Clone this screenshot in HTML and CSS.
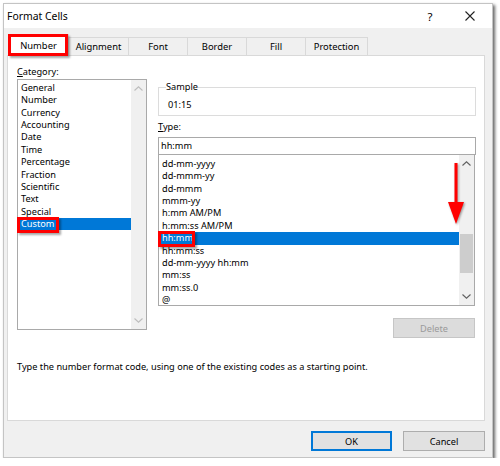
FILE: index.html
```html
<!DOCTYPE html>
<html>
<head>
<meta charset="utf-8">
<link rel="stylesheet" href="styles.css">
</head>
<body>
<div class="dialog">
  <div class="titlebar">
    <span class="title">Format Cells</span>
    <span class="help">?</span>
    <span class="close"><svg width="10" height="10" viewBox="0 0 10 10"><path d="M0.5 0.5 L9.5 9.5 M9.5 0.5 L0.5 9.5" stroke="#222" stroke-width="1.1" fill="none"/></svg></span>
  </div>
  <div class="tabs">
    <div class="tab active">Number<span class="mark"></span></div>
    <div class="tab w60">Alignment</div>
    <div class="tab w59">Font</div>
    <div class="tab w59">Border</div>
    <div class="tab w59">Fill</div>
    <div class="tab w62">Protection</div>
  </div>
  <div class="panel">
    <div class="columns">
      <div class="col-left">
        <div class="label"><u>C</u>ategory:</div>
        <div class="listbox cat">
          <div class="items">
            <div class="item">General</div>
            <div class="item">Number</div>
            <div class="item">Currency</div>
            <div class="item">Accounting</div>
            <div class="item">Date</div>
            <div class="item">Time</div>
            <div class="item">Percentage</div>
            <div class="item">Fraction</div>
            <div class="item">Scientific</div>
            <div class="item">Text</div>
            <div class="item">Special</div>
            <div class="item sel">Custom<span class="mark mark-cat"></span></div>
          </div>
          <div class="vscroll light">
            <div class="sbtn"><svg width="9" height="5" viewBox="0 0 9 5"><path d="M0.5 4.5 L4.5 0.8 L8.5 4.5" stroke="currentColor" stroke-width="1.1" fill="none"/></svg></div>
            <div class="track"></div>
            <div class="sbtn"><svg width="9" height="5" viewBox="0 0 9 5"><path d="M0.5 0.5 L4.5 4.2 L8.5 0.5" stroke="currentColor" stroke-width="1.1" fill="none"/></svg></div>
          </div>
        </div>
      </div>
      <div class="col-right">
        <fieldset class="sample">
          <legend>Sample</legend>
          <div class="sample-val">01:15</div>
        </fieldset>
        <div class="label type-label"><u>T</u>ype:</div>
        <div class="input">hh:mm</div>
        <div class="listbox types">
          <div class="items">
            <div class="item">dd-mm-yyyy</div>
            <div class="item">dd-mmm-yy</div>
            <div class="item">dd-mmm</div>
            <div class="item">mmm-yy</div>
            <div class="item">h:mm AM/PM</div>
            <div class="item">h:mm:ss AM/PM</div>
            <div class="item sel">hh:mm<span class="mark mark-type"></span></div>
            <div class="item">hh:mm:ss</div>
            <div class="item">dd-mm-yyyy hh:mm</div>
            <div class="item">mm:ss</div>
            <div class="item">mm:ss.0</div>
            <div class="item">@</div>
          </div>
          <div class="vscroll">
            <div class="sbtn"><svg width="9" height="5" viewBox="0 0 9 5"><path d="M0.5 4.5 L4.5 0.8 L8.5 4.5" stroke="currentColor" stroke-width="1.1" fill="none"/></svg></div>
            <div class="track"><div class="thumb"></div></div>
            <div class="sbtn"><svg width="9" height="5" viewBox="0 0 9 5"><path d="M0.5 0.5 L4.5 4.2 L8.5 0.5" stroke="currentColor" stroke-width="1.1" fill="none"/></svg></div>
          </div>
          <svg class="arrow" width="20" height="66" viewBox="0 0 20 66"><rect x="7.5" y="1" width="3" height="41" fill="#ff0000"/><polygon points="1,40 17,40 9,62" fill="#ff0000"/></svg>
        </div>
        <div class="delete-row"><button class="btn disabled">Delete</button></div>
      </div>
    </div>
    <p class="desc">Type the number format code, using one of the existing codes as a starting point.</p>
  </div>
  <div class="footer">
    <button class="btn default ok">OK</button>
    <button class="btn cancel">Cancel</button>
  </div>
</div>
</body>
</html>
```

FILE: styles.css
```css
* { box-sizing: border-box; }
html, body { margin: 0; padding: 0; background: #fff; }
body {
  font-family: "Noto Sans", "Open Sans", sans-serif;
  font-size: 9.2px;
  color: #000;
}
.dialog {
  margin: 3px 0 0 3px;
  width: 490px;
  height: 455px;
  background: #f0f0f0;
  border: 1px solid #c4c4c4;
  box-shadow: 2px 2px 3px rgba(0,0,0,0.6);
  display: flex;
  flex-direction: column;
}
.titlebar {
  height: 24px;
  background: #fff;
  display: flex;
  align-items: center;
  padding-left: 3px;
  padding-right: 14px;
}
.title { flex: 1; font-size: 10.4px; }
.help { width: 16px; text-align: center; font-size: 11.5px; margin-right: 24px; }
.close { width: 16px; display: flex; justify-content: center; }

.tabs {
  height: 27px;
  display: flex;
  align-items: flex-end;
  padding-left: 4px;
  position: relative;
  z-index: 2;
}
.tab {
  height: 18px;
  line-height: 17px;
  text-align: center;
  border: 1px solid #d9d9d9;
  border-bottom: none;
  margin-left: -1px;
  background: #f0f0f0;
  font-size: 9.4px;
}
.tab.active {
  position: relative;
  margin-left: 0;
  width: 61px;
  line-height: 21px;
  background: #fff;
  margin-bottom: -1px;
  height: 22px;
}
.w60 { width: 61px; }
.w59 { width: 60px; }
.w62 { width: 63px; }
.mark {
  position: absolute;
  border: 3px solid #ff0000;
  box-shadow: 2px 2px 2px rgba(0,0,0,0.35);
  pointer-events: none;
}
.tab .mark { left: -1px; top: -1px; right: 0; bottom: 0; }

.panel {
  margin-left: 3px;
  width: 478px;
  height: 366px;
  background: #fff;
  border: 1px solid #d9d9d9;
  padding: 9px 0 0 9px;
  position: relative;
  z-index: 1;
}
.columns {
  display: grid;
  grid-template-columns: 130px 318px;
  column-gap: 11px;
  align-items: start;
}
.label { height: 14px; line-height: 14px; }
.listbox {
  display: flex;
  border: 1px solid #a9a9a9;
  background: #fff;
  position: relative;
}
.listbox.cat { height: 251px; }
.items { flex: 1; padding-top: 2px; }
.item {
  height: 12.36px;
  line-height: 12.36px;
  padding-left: 3px;
  white-space: nowrap;
  position: relative;
}
.item.sel { background: #0078d7; color: #fff; }
.mark-cat { left: -1px; top: -1px; width: 42px; height: 16px; }
.mark-type { left: -1px; top: -1px; width: 37px; height: 16px; }

.vscroll {
  width: 15px;
  background: #f0f0f0;
  display: flex;
  flex-direction: column;
  color: #606060;
}
.vscroll.light { color: #bdbdbd; }
.sbtn { height: 17px; display: flex; align-items: center; justify-content: center; }
.track { flex: 1; }
.thumb { margin: 62px 1px 0 1px; height: 39px; background: #cdcdcd; }

.sample {
  margin: 15px 0 0 0;
  padding: 0 0 0 7px;
  border: 1px solid #dcdcdc;
  height: 36px;
  min-width: 0;
}
.sample legend { padding: 0; height: 14px; line-height: 14px; }
.sample-val { margin: 4px 0 0 2px; line-height: 14px; }
.type-label { margin-top: 4px; }
.input {
  margin-top: 3px;
  height: 18px;
  line-height: 16px;
  border: 1px solid #a9a9a9;
  padding-left: 2px;
}
.listbox.types { height: 151px; width: 317px; border-top: none; }
.listbox.types .items { padding-top: 3px; }
.arrow {
  position: absolute;
  left: 288px;
  top: 7px;
  filter: drop-shadow(1px 1px 1px rgba(0,0,0,0.4));
}
.delete-row { display: flex; justify-content: flex-end; margin-top: 12px; padding-right: 1px; }
.btn {
  font-family: inherit;
  font-size: 9.2px;
  height: 20px;
  padding: 0;
  background: #e1e1e1;
  border: 1px solid #adadad;
  color: #000;
}
.btn.disabled { width: 82px; background: #dcdcdc; border-color: #c6c6c6; color: #9a9a9a; }
.desc { margin: 22px 0 0 0; line-height: 14px; }

.footer {
  margin-top: 10px;
  display: flex;
  justify-content: flex-end;
  gap: 11px;
  padding-right: 7px;
}
.ok { width: 81px; border: 1px solid #0078d7; box-shadow: inset 0 0 0 1px #0078d7; }
.cancel { width: 82px; }
```
